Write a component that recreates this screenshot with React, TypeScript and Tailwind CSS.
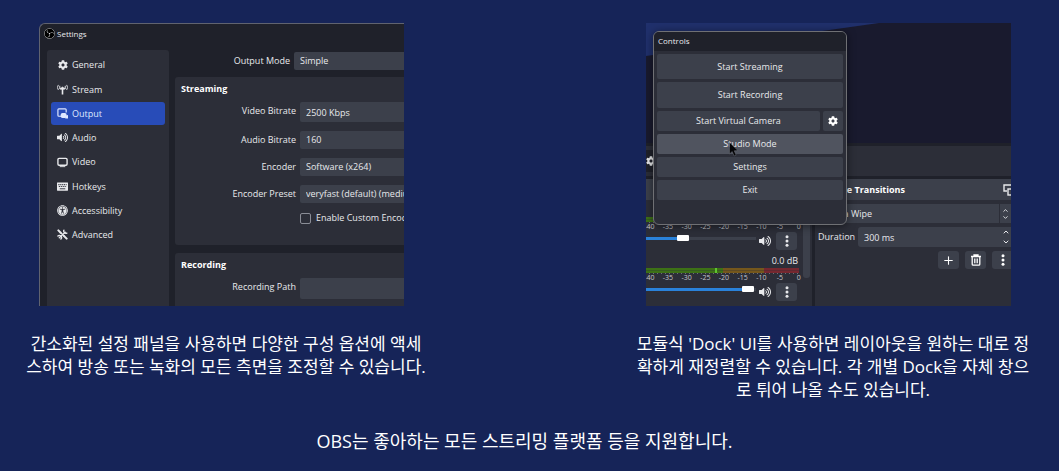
import type { ReactNode } from 'react';
import { ChevronDown, ChevronUp, Plus } from 'lucide-react';
import { FaCog, FaUniversalAccess, FaVolumeUp } from 'react-icons/fa';
import { SiObsstudio } from 'react-icons/si';

type FieldProps = {
  id: string;
  label: string;
  children: ReactNode;
};

const controlClass =
  'block min-w-0 flex-1 appearance-none rounded-l-[2px] bg-[#3c404b] pl-[6px] text-[9px] text-[#e8e9ec] outline-none';

function AntennaIcon() {
  return (
    <svg viewBox="0 0 24 24" className="size-[11px]" fill="none" stroke="currentColor">
      <path d="M12 9v14M7 10h10" strokeWidth="3.500" />
      <path d="M12 6l5 5H7z" fill="currentColor" />
      <path d="M6 4v7M18 4v7" strokeWidth="2" />
      <path d="M3 2a9 9 0 0 0 0 11M21 2a9 9 0 0 1 0 11" strokeWidth="2" />
    </svg>
  );
}

function OutputIcon() {
  return (
    <svg viewBox="0 0 24 24" className="size-[11px]">
      <path d="M9 18H4a2 2 0 0 1-2-2V4a2 2 0 0 1 2-2h14a2 2 0 0 1 2 2v6" fill="none" stroke="currentColor" strokeWidth="2.600" />
      <rect x="8" y="11" width="13" height="11" rx="4" fill="currentColor" />
      <path d="M18 17l6-2v8h-6z" fill="currentColor" />
    </svg>
  );
}

function MonitorIcon() {
  return (
    <svg viewBox="0 0 24 24" className="size-[11px]" fill="none" stroke="currentColor" strokeWidth="3">
      <rect x="2" y="3" width="20" height="15" rx="2.500" />
      <path d="M6 21h12" strokeWidth="2" />
    </svg>
  );
}

function KeyboardIcon() {
  return (
    <svg viewBox="0 0 24 24" className="size-[11px]" fill="none">
      <rect x="0" y="3" width="24" height="18" rx="1" fill="currentColor" />
      <path d="M3 8h18M4 12h17" stroke="#2c2e38" strokeWidth="2.400" strokeDasharray="2.400 1.800" />
      <path d="M6 17h12" stroke="#2c2e38" strokeWidth="2" />
    </svg>
  );
}

function ToolsIcon() {
  return (
    <svg viewBox="0 0 24 24" className="size-[11px]" fill="none" stroke="currentColor" strokeLinecap="round">
      <path d="M3 3l5 5M15 15l6 6" strokeWidth="4.500" />
      <path d="M8 8l8 8M5 19L18 7" strokeWidth="3" />
      <path d="M15 2.500a5 5 0 0 0 6.500 6.500M2 15.500a4.500 4.500 0 0 1 6.500 6.500" strokeWidth="3" />
    </svg>
  );
}

function DotsIcon() {
  return (
    <svg viewBox="0 0 12 12" className="size-[12px]" fill="currentColor">
      <circle cx="6" cy="1.700" r="1.500" />
      <circle cx="6" cy="6" r="1.500" />
      <circle cx="6" cy="10.300" r="1.500" />
    </svg>
  );
}

function TrashIcon() {
  return (
    <svg viewBox="0 0 12 12" className="size-[12px]" fill="none" stroke="currentColor" strokeWidth="1.300">
      <path d="M1 2.500h10M4 2.200V1h4v1.200M2.200 2.500v7.700a1 1 0 0 0 1 1h5.600a1 1 0 0 0 1-1V2.500M4.800 4.500v4.700M7.200 4.500v4.700" />
    </svg>
  );
}

function PopOutIcon() {
  return (
    <svg viewBox="0 0 12 12" className="size-[12px]" fill="none" stroke="currentColor" strokeWidth="1.400">
      <path d="M4 7H1V1h10v3" />
      <rect x="5" y="5" width="6" height="6" />
    </svg>
  );
}

const menu = [
  { name: 'General', icon: <FaCog className="size-[10px]" /> },
  { name: 'Stream', icon: <AntennaIcon /> },
  { name: 'Output', icon: <OutputIcon /> },
  { name: 'Audio', icon: <FaVolumeUp className="size-[11px]" /> },
  { name: 'Video', icon: <MonitorIcon /> },
  { name: 'Hotkeys', icon: <KeyboardIcon /> },
  { name: 'Accessibility', icon: <FaUniversalAccess className="size-[11px]" /> },
  { name: 'Advanced', icon: <ToolsIcon /> },
];

function Field({ id, label, children }: FieldProps) {
  return (
    <div className="flex">
      <label htmlFor={id} className="mr-1 w-[121px] shrink-0 text-right leading-[18px]">
        {label}
      </label>
      {children}
    </div>
  );
}

function SettingsWindow() {
  return (
    <div className="flex h-[283px] flex-col overflow-hidden rounded-tl-[6px] border-t border-l border-[#60636f] bg-[#1f212a] text-[9px] text-[#e8e9ec]">
      <div className="flex h-[19px] shrink-0 items-center gap-[2px] pl-1 text-[8px]">
        <SiObsstudio className="size-[11px] rounded-full bg-black" />
        Settings
      </div>

      <div className="flex min-h-0 flex-1">
        <nav className="mt-[7px] ml-[7px] w-[122px] shrink-0 rounded-t-[3px] bg-[#2c2e38] px-1 pt-[3px]">
          <ul className="flex h-[194px] flex-col">
            {menu.map((item) => (
              <li key={item.name} className="flex flex-1 items-center">
                <button
                  className={
                    item.name === 'Output'
                      ? 'flex h-[23px] w-full items-center gap-1 rounded-[3px] bg-[#284cb8] pl-[6px] text-[#dfe8ff]'
                      : 'flex h-[23px] w-full items-center gap-1 rounded-[3px] pl-[6px]'
                  }
                >
                  <span className="flex w-[11px] justify-center">{item.icon}</span>
                  {item.name}
                </button>
              </li>
            ))}
          </ul>
        </nav>

        <div className="ml-[6px] flex min-w-0 flex-1 flex-col">
          <div className="mt-[9px] flex">
            <label htmlFor="mode" className="mr-1 w-[115px] shrink-0 text-right leading-[18px]">
              Output Mode
            </label>
            <select id="mode" className={`${controlClass} h-[18px]`}>
              <option>Simple</option>
            </select>
          </div>

          <section className="mt-[7px] h-[168px] shrink-0 rounded-l-[3px] bg-[#2c2e38]">
            <h3 className="h-[25px] pl-[6px] leading-[24px] font-bold text-white">Streaming</h3>
            <div className="flex flex-col gap-[9px]">
              <Field id="video" label="Video Bitrate">
                <input id="video" defaultValue="2500 Kbps" className={`${controlClass} h-[20px]`} />
              </Field>
              <Field id="audio" label="Audio Bitrate">
                <select id="audio" className={`${controlClass} h-[18px]`}>
                  <option>160</option>
                </select>
              </Field>
              <Field id="encoder" label="Encoder">
                <select id="encoder" className={`${controlClass} h-[18px]`}>
                  <option>Software (x264)</option>
                </select>
              </Field>
              <Field id="preset" label="Encoder Preset">
                <select id="preset" className={`${controlClass} h-[18px]`}>
                  <option>veryfast (default) (medium CPU usage)</option>
                </select>
              </Field>
              <label className="ml-[125px] flex items-center gap-[5px] overflow-hidden leading-[12px] whitespace-nowrap">
                <input
                  type="checkbox"
                  className="size-[11px] shrink-0 appearance-none rounded-[2px] border border-[#8a8d96]"
                />
                Enable Custom Encoder Settings
              </label>
            </div>
          </section>

          <section className="mt-2 flex-1 rounded-tl-[3px] bg-[#2c2e38]">
            <h3 className="h-[25px] pl-[6px] leading-[24px] font-bold text-white">Recording</h3>
            <Field id="path" label="Recording Path">
              <input id="path" className={`${controlClass} h-[21px]`} />
            </Field>
          </section>
        </div>
      </div>
    </div>
  );
}

function Channel({ name, volume }: { name: string; volume: number }) {
  const fill = `linear-gradient(to right, #2a82da ${volume}%, #3c404b ${volume}%)`;

  return (
    <div className="h-[50px] shrink-0">
      <div className="h-[14px] pr-[5px] text-right text-[9px] leading-[14px]">0.0 dB</div>
      <svg viewBox="0 0 153 7" className="h-[7px] w-[153px]" shapeRendering="crispEdges">
        <path d="M0 0h77v5H0z" fill="#3d7116" />
        <path d="M77 0h41v5H77z" fill="#75571c" />
        <path d="M118 0h35v5h-35z" fill="#762830" />
        <path d="M0 2h153v1H0z" fill="#2c2e38" opacity="0.3" />
        <path d="M69 0h2v5h-2z" fill="#60c430" />
        <path d="M3 5.500h150" stroke="#6d7078" strokeDasharray="1 3" />
      </svg>
      <div className="-ml-[6px] grid h-[7px] w-[168px] grid-cols-9 text-center text-[7px] leading-[6px] text-[#c4c6cc]">
        {['-40', '-35', '-30', '-25', '-20', '-15', '-10', '-5', '0'].map((mark) => (
          <span key={mark}>{mark}</span>
        ))}
      </div>
      <div className="mt-[1px] flex h-[18px] items-center">
        <input
          type="range"
          aria-label={name}
          defaultValue={volume}
          className="mb-[6px] h-[3px] w-[110px] appearance-none [&::-webkit-slider-thumb]:h-[6px] [&::-webkit-slider-thumb]:w-[12px] [&::-webkit-slider-thumb]:appearance-none [&::-webkit-slider-thumb]:rounded-[1px] [&::-webkit-slider-thumb]:bg-white"
          style={{ background: fill }}
        />
        <button aria-label={`Mute ${name}`} className="ml-[3px]">
          <FaVolumeUp className="size-[12px]" />
        </button>
        <button
          aria-label={`${name} options`}
          className="ml-[5px] flex h-[18px] w-[21px] items-center justify-center rounded-[3px] bg-[#3c404b]"
        >
          <DotsIcon />
        </button>
      </div>
    </div>
  );
}

function Docks() {
  return (
    <div className="flex h-[127px] gap-[3px] bg-[#1f212a]">
      <div className="w-[166px] shrink-0 overflow-hidden bg-[#2c2e38]">
        <div className="h-[21px] bg-[#3c404b]" />
        <div className="flex">
          <div className="flex w-[157px] shrink-0 flex-col gap-[1px] overflow-hidden pt-[3px]">
            <Channel name="Desktop Audio" volume={32} />
            <Channel name="Mic/Aux" volume={98} />
          </div>
          <div className="h-[78px] w-[7px] rounded-b-[3px] bg-[#3c404b]" />
        </div>
      </div>

      <div className="min-w-0 flex-1 bg-[#2c2e38] text-[9px]">
        <div className="flex h-[21px] items-center justify-end overflow-hidden bg-[#3c404b]">
          <h3 className="mr-[98px] font-bold whitespace-nowrap text-white">Scene Transitions</h3>
          <button aria-label="Undock" className="-mr-1 shrink-0">
            <PopOutIcon />
          </button>
        </div>
        <div className="mt-1 flex h-[19px] gap-[1px]">
          <select
            aria-label="Transition"
            className="min-w-0 flex-1 appearance-none bg-[#3c404b] pl-[10px] text-[9px] outline-none"
          >
            <option>Luma Wipe</option>
          </select>
          <span className="flex w-[11px] flex-col items-center justify-center bg-[#3c404b]">
            <ChevronUp className="size-[7px]" strokeWidth={3} />
            <ChevronDown className="size-[7px]" strokeWidth={3} />
          </span>
        </div>
        <div className="mt-1 flex h-[20px] items-center">
          <label htmlFor="duration" className="w-[43px] shrink-0 pl-[3px]">
            Duration
          </label>
          <input
            id="duration"
            defaultValue="300 ms"
            className="h-full min-w-0 flex-1 rounded-l-[3px] bg-[#3c404b] pl-[6px] text-[9px] outline-none"
          />
          <span className="flex h-full w-[11px] flex-col items-center justify-between bg-[#3c404b] py-[1px]">
            <ChevronUp className="size-[8px]" strokeWidth={3} />
            <ChevronDown className="size-[8px]" strokeWidth={3} />
          </span>
        </div>
        <div className="mt-1 -mr-[2px] flex justify-end gap-[6px] text-white">
          <button aria-label="Add" className="flex h-[18px] w-[21px] items-center justify-center rounded-[3px] bg-[#3c404b]">
            <Plus className="size-[13px]" />
          </button>
          <button aria-label="Remove" className="flex h-[18px] w-[21px] items-center justify-center rounded-[3px] bg-[#3c404b]">
            <TrashIcon />
          </button>
          <button aria-label="More" className="flex h-[18px] w-[21px] items-center justify-center rounded-[3px] bg-[#3c404b]">
            <DotsIcon />
          </button>
        </div>
      </div>
    </div>
  );
}

function ControlsPopup() {
  return (
    <div className="absolute top-2 left-[7px] h-[194px] w-[194px] overflow-hidden rounded-[6px] border border-[#6f7074] bg-[#2c2e38] text-[9px] shadow-[0_1px_8px_rgba(0,0,0,0.5)]">
      <h3 className="h-[19px] bg-[#1f212a] pl-1 text-[8px] leading-[18px]">Controls</h3>
      <div className="flex flex-col gap-[3px] px-[3px] pt-[3px]">
        <button className="h-[25px] rounded-[2px] bg-[#3c404b]">Start Streaming</button>
        <button className="h-[26px] rounded-[2px] bg-[#3c404b]">Start Recording</button>
        <div className="flex h-[20px] gap-[3px]">
          <button className="flex-1 rounded-[2px] bg-[#3c404b]">Start Virtual Camera</button>
          <button
            aria-label="Virtual camera settings"
            className="flex w-[20px] items-center justify-center rounded-[2px] bg-[#3c404b] text-white"
          >
            <FaCog className="size-[10px]" />
          </button>
        </div>
        <button className="h-[20px] rounded-[2px] bg-[#50545f]">Studio Mode</button>
        <button className="h-[20px] rounded-[2px] bg-[#3c404b]">Settings</button>
        <button className="h-[20px] rounded-[2px] bg-[#3c404b]">Exit</button>
      </div>
      {/* Mouse pointer */}
      <svg viewBox="0 0 10 15" className="absolute top-[110px] left-[75px] h-[15px] w-[10px]">
        <path d="M.5.5v11.500l2.700-2.500 1.900 4.500 2-.9-1.900-4.300 3.700-.2z" fill="#050507" stroke="#6b6e76" strokeWidth="0.500" />
      </svg>
    </div>
  );
}

function DockWindow() {
  return (
    <div className="relative h-[283px] overflow-hidden bg-[#1f212a] text-[#e8e9ec]">
      <svg viewBox="0 0 365 120" className="block h-[120px] w-full" preserveAspectRatio="none">
        <path d="M0 0h365v120H0z" fill="#191a2e" />
        <path d="M0 0h233L0 33z" fill="#20306c" />
      </svg>
      <div className="mt-[3px] mb-[3px] flex h-[30px] items-center bg-[#2c2e38]">
        <span className="flex h-[22px] w-[12px] items-center bg-[#1f212a]">
          <FaCog className="size-[10px] shrink-0" />
        </span>
      </div>
      <Docks />
      <ControlsPopup />
    </div>
  );
}

function Feature({ text, children }: { text: string; children: ReactNode }) {
  return (
    <figure className="w-[404px]">
      <div className="pr-6 pl-[15px] font-['Open_Sans','Noto_Sans',sans-serif]">{children}</div>
      <figcaption className="mt-[26px] text-center text-[17px] leading-[23px]">{text}</figcaption>
    </figure>
  );
}

export default function App() {
  return (
    <main className="min-h-screen bg-[#162458] px-5 pt-[23px] pb-[18px] font-['Open_Sans','Noto_Sans_CJK_KR',sans-serif] text-white">
      <div className="flex flex-wrap justify-center gap-x-[203px] gap-y-10">
        <Feature text="간소화된 설정 패널을 사용하면 다양한 구성 옵션에 액세스하여 방송 또는 녹화의 모든 측면을 조정할 수 있습니다.">
          <SettingsWindow />
        </Feature>
        <Feature text="모듈식 'Dock' UI를 사용하면 레이아웃을 원하는 대로 정확하게 재정렬할 수 있습니다. 각 개별 Dock을 자체 창으로 튀어 나올 수도 있습니다.">
          <DockWindow />
        </Feature>
      </div>
      <p className="mt-[27px] pr-[10px] text-center text-[18px] leading-[27px]">
        OBS는 좋아하는 모든 스트리밍 플랫폼 등을 지원합니다.
      </p>
    </main>
  );
}
